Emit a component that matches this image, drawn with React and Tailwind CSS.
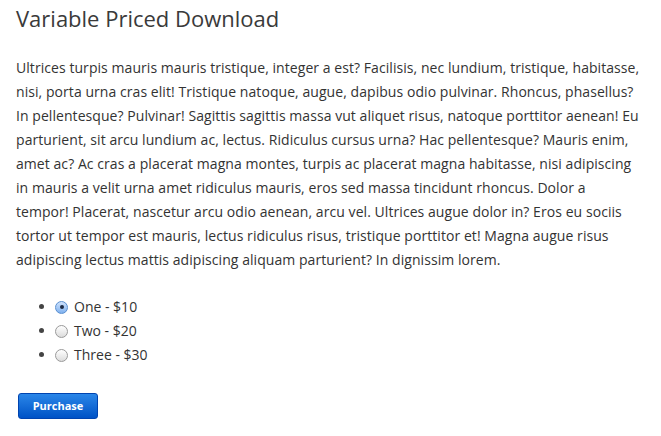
export default function App() {
  const lines = [
    "Ultrices turpis mauris mauris tristique, integer a est? Facilisis, nec lundium, tristique, habitasse,",
    "nisi, porta urna cras elit! Tristique natoque, augue, dapibus odio pulvinar. Rhoncus, phasellus?",
    "In pellentesque? Pulvinar! Sagittis sagittis massa vut aliquet risus, natoque porttitor aenean! Eu",
    "parturient, sit arcu lundium ac, lectus. Ridiculus cursus urna? Hac pellentesque? Mauris enim,",
    "amet ac? Ac cras a placerat magna montes, turpis ac placerat magna habitasse, nisi adipiscing",
    "in mauris a velit urna amet ridiculus mauris, eros sed massa tincidunt rhoncus. Dolor a",
    "tempor! Placerat, nascetur arcu odio aenean, arcu vel. Ultrices augue dolor in? Eros eu sociis",
    "tortor ut tempor est mauris, lectus ridiculus risus, tristique porttitor et! Magna augue risus",
    "adipiscing lectus mattis adipiscing aliquam parturient? In dignissim lorem.",
  ];
  const options = [
    { label: "One - $10", checked: true },
    { label: "Two - $20", checked: false },
    { label: "Three - $30", checked: false },
  ];
  return (
    <div
      className="w-[661px] h-[436px] bg-white text-[#333333] px-4 overflow-hidden"
      style={{ fontFamily: '"Open Sans", sans-serif' }}
    >
      <h1 className="text-[22px] leading-[30px] pt-[3px] text-[#3a3a3a] font-normal">
        Variable Priced Download
      </h1>
      <p className="mt-[23px] text-[14px] leading-[24px] tracking-[0.06px]">
        {lines.map((l, i) => (
          <span key={i} className="block whitespace-nowrap">
            {l}
          </span>
        ))}
      </p>
      <ul className="mt-[23px] pl-10 list-disc text-[14px] leading-[24px] marker:text-[#444]">
        {options.map((o) => (
          <li key={o.label}>
            <span className="inline-flex items-center gap-[6px] -ml-[1px] align-top h-[24px]">
              {o.checked ? (
                <span className="w-[13px] h-[13px] rounded-full border border-[#5a8fd0] bg-gradient-to-b from-[#cfe2fb] to-[#7fb1ef] flex items-center justify-center">
                  <span className="w-[4px] h-[4px] rounded-full bg-[#1c2a44]"></span>
                </span>
              ) : (
                <span className="w-[13px] h-[13px] rounded-full border border-[#9a9a9a] bg-gradient-to-b from-[#ffffff] to-[#dcdcdc]"></span>
              )}
              <span>{o.label}</span>
            </span>
          </li>
        ))}
      </ul>
      <button className="mt-[26px] ml-[2px] w-[80px] h-[26px] rounded-[3px] border border-[#0044b0] bg-gradient-to-b from-[#2a86e8] to-[#0052c6] text-white text-[11px] font-bold flex items-center justify-center">
        Purchase
      </button>
    </div>
  );
}
